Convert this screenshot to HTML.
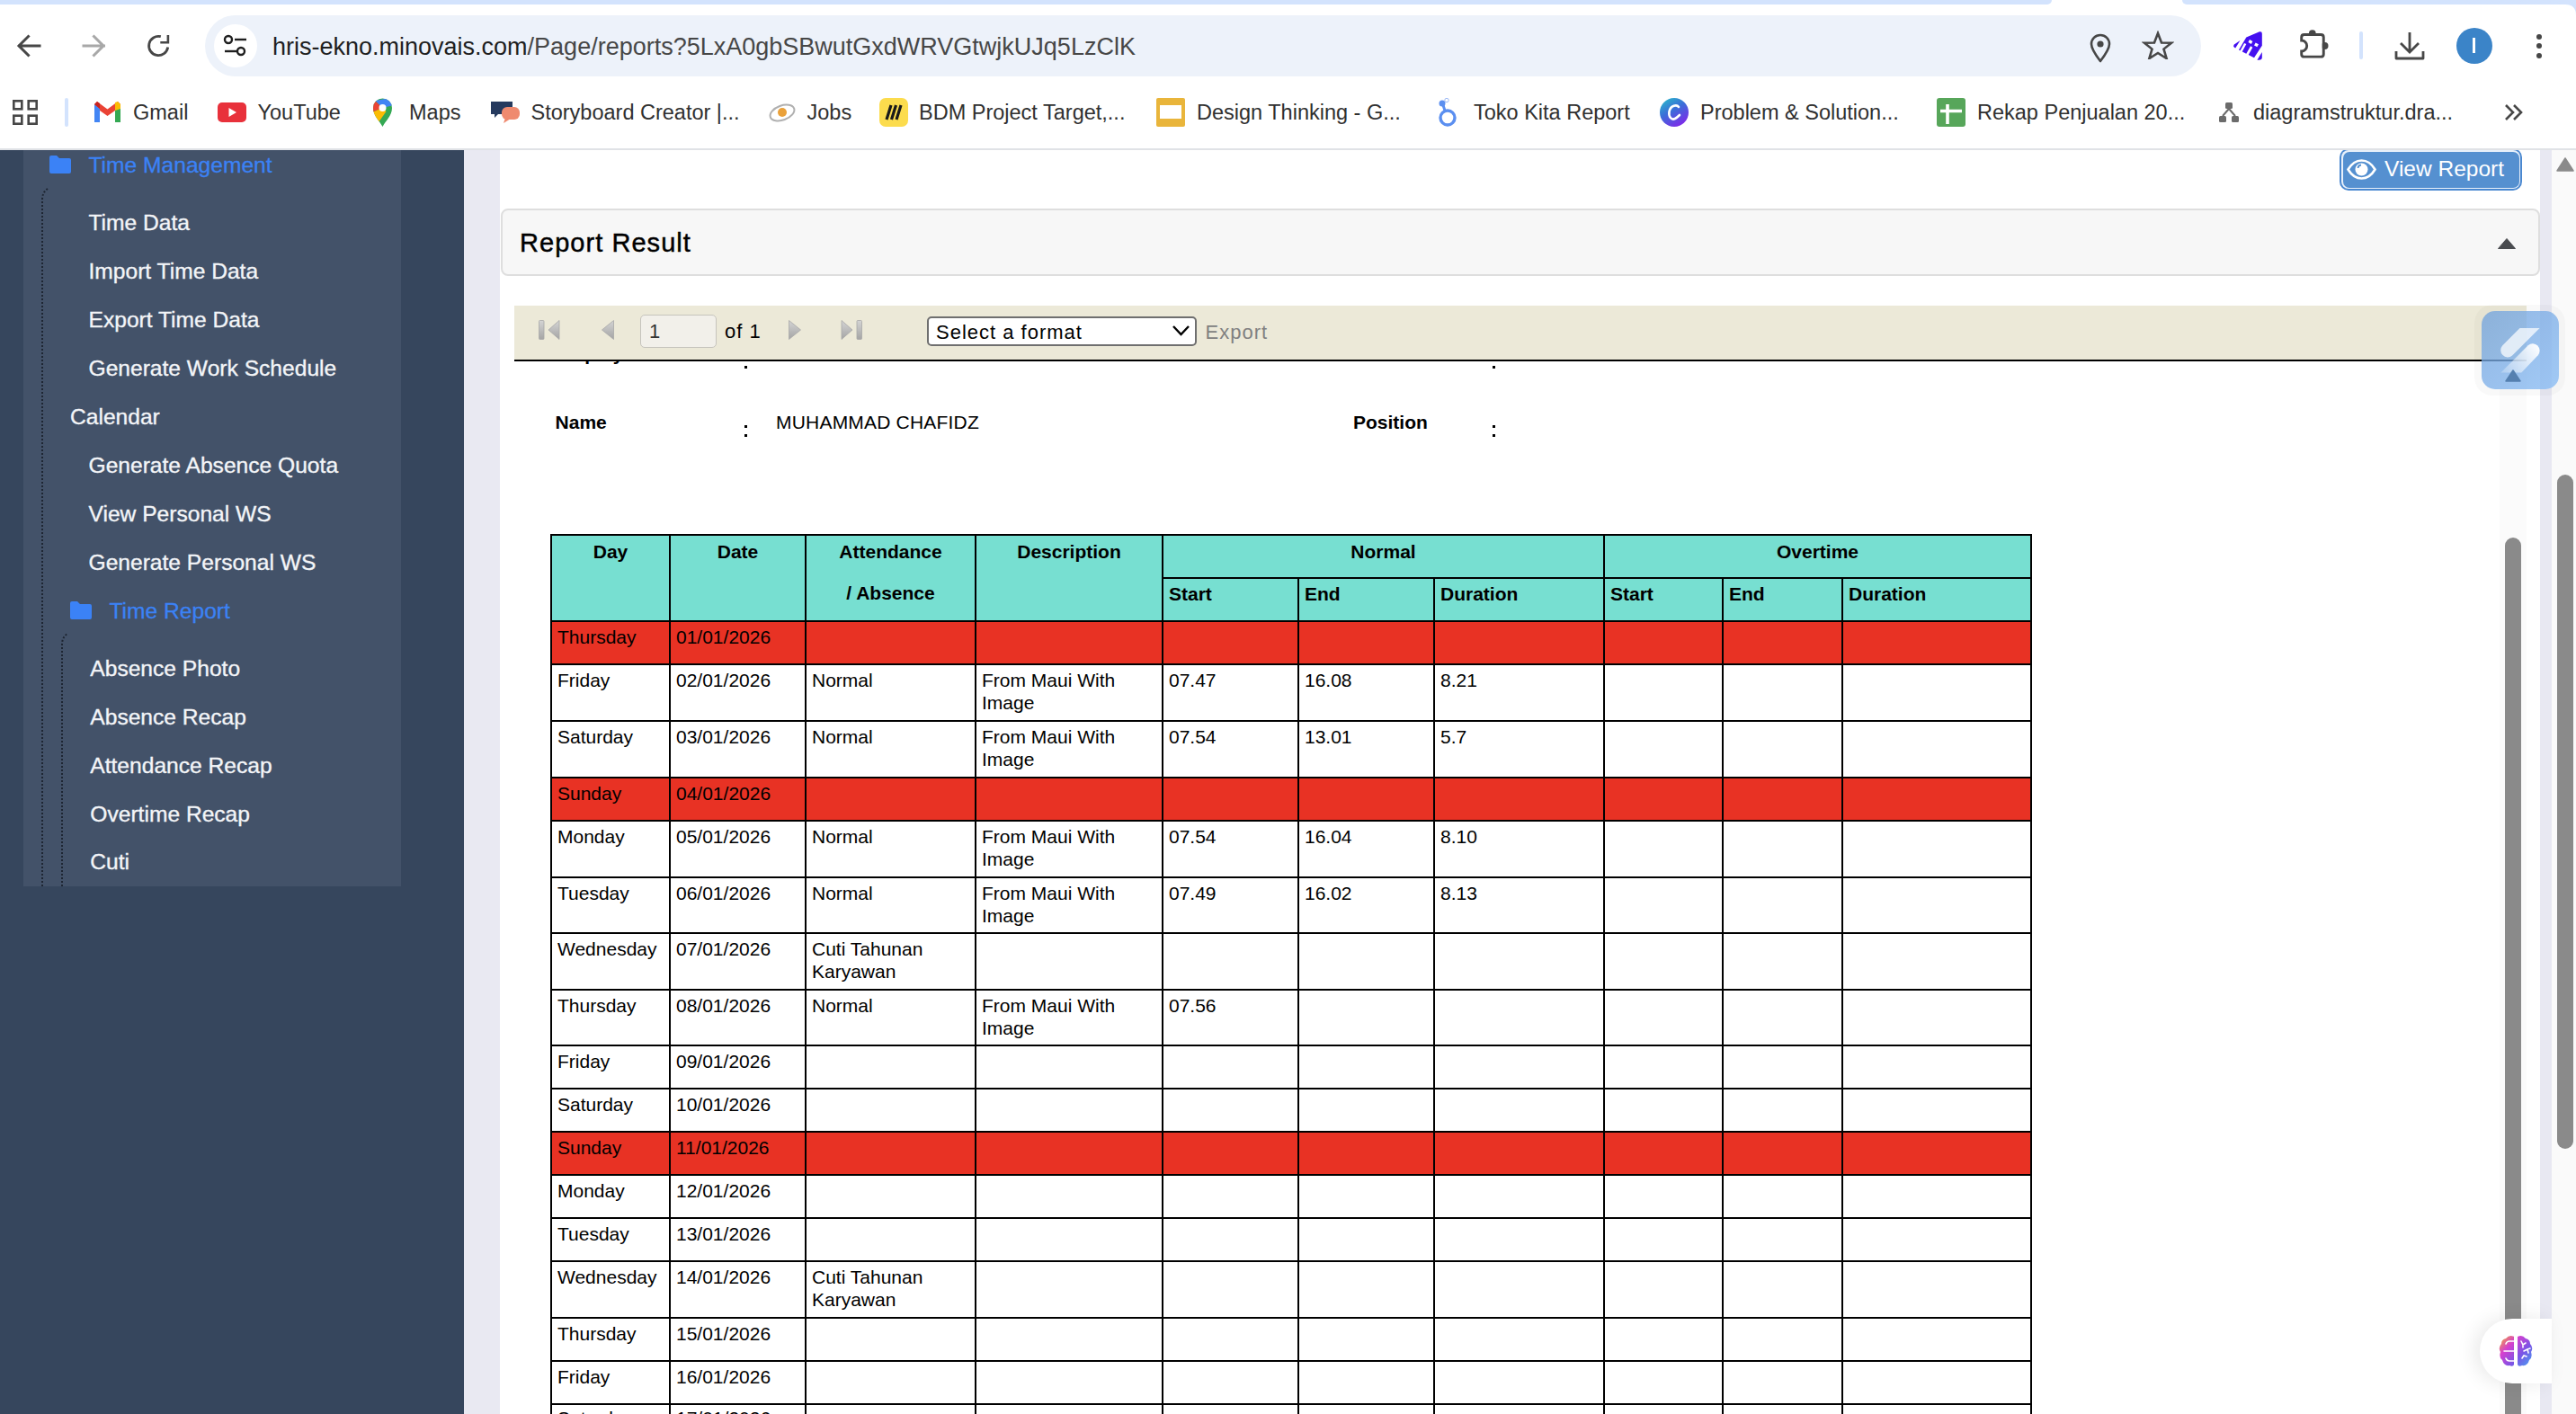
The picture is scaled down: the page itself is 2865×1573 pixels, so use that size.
<!DOCTYPE html><html><head><meta charset="utf-8"><style>
html,body{margin:0;padding:0;}
body{width:2865px;height:1573px;overflow:hidden;position:relative;background:#fff;font-family:"Liberation Sans",sans-serif;}
.a{position:absolute;}
.t{position:absolute;white-space:nowrap;}
</style></head><body>
<div class="a" style="left:0px;top:0px;width:2865px;height:167px;background:#fff"></div>
<div class="a" style="left:0px;top:0px;width:2282px;height:5px;background:#d3e3fd;border-radius:0 0 10px 0"></div>
<div class="a" style="left:2427px;top:0px;width:438px;height:5px;background:#d3e3fd;border-radius:0 0 0 10px"></div>
<svg class="a" style="left:2853px;top:5px" width="12" height="12" viewBox="0 0 12 12"><path d="M0 0H12V12Q12 0 0 0Z" fill="#d3e3fd"/></svg>
<svg class="a" style="left:16px;top:36px" width="32" height="30" viewBox="0 0 32 30"><path d="M28 15H5.5M15.5 4.5L5 15L15.5 25.5" fill="none" stroke="#474747" stroke-width="3" stroke-linecap="square"/></svg>
<svg class="a" style="left:89px;top:36px" width="32" height="30" viewBox="0 0 32 30"><path d="M4 15H26.5M15.5 4.5L26 15L15.5 25.5" fill="none" stroke="#a8a8a8" stroke-width="3" stroke-linecap="square"/></svg>
<svg class="a" style="left:160px;top:36px" width="32" height="30" viewBox="0 0 32 30"><path d="M18.8 4.7A10.6 10.6 0 1 0 26.7 16.5" fill="none" stroke="#474747" stroke-width="2.8"/><path d="M18.3 11.2H26.9V3.1" fill="none" stroke="#474747" stroke-width="2.6"/></svg>
<div class="a" style="left:228px;top:17px;width:2220px;height:68px;background:#edf2fa;border-radius:34px"></div>
<div class="a" style="left:238px;top:27px;width:48px;height:48px;background:#fff;border-radius:50%"></div>
<svg class="a" style="left:248px;top:38px" width="28" height="26" viewBox="0 0 28 26"><circle cx="6" cy="6" r="4" fill="none" stroke="#1f1f1f" stroke-width="2.4"/><path d="M13 6H26" stroke="#1f1f1f" stroke-width="2.4"/><circle cx="20" cy="19" r="4" fill="none" stroke="#1f1f1f" stroke-width="2.4"/><path d="M2 19H15" stroke="#1f1f1f" stroke-width="2.4"/></svg>
<div class="t " style="left:303px;top:36.92px;font-size:27px;line-height:31.05px;color:#1f1f1f">hris-ekno.minovais.com<span style="color:#474747">/Page/reports?5LxA0gbSBwutGxdWRVGtwjkUJq5LzClK</span></div>
<svg class="a" style="left:2323px;top:37px" width="26" height="33" viewBox="0 0 26 33"><path d="M13 31C13 31 3 18 3 12A10 10 0 0 1 23 12C23 18 13 31 13 31Z" fill="none" stroke="#474747" stroke-width="2.6" stroke-linejoin="round"/><circle cx="13" cy="12" r="3.6" fill="#474747"/></svg>
<svg class="a" style="left:2382px;top:34px" width="36" height="32" viewBox="0 0 36 32"><path d="M18 3L22 13.5L33 13.8L24.5 20.6L27.6 31L18 25L8.4 31L11.5 20.6L3 13.8L14 13.5Z" fill="none" stroke="#474747" stroke-width="2.6" stroke-linejoin="miter"/></svg>
<svg class="a" style="left:2484px;top:35px" width="32" height="32" viewBox="0 0 32 32"><path d="M14.3 6.5L29 0.3Q31.8 -0.5 31.8 2.5V15.7L23 29.3L6 20.6Z" fill="#4410f0"/><path d="M13.2 13.5L8 23M20.2 17L14.6 27" stroke="#fff" stroke-width="2.6"/><rect x="17" y="9.8" width="3.8" height="3.4" transform="rotate(28 18.9 11.5)" fill="#fff"/><rect x="23.6" y="13.2" width="3.8" height="3.4" transform="rotate(28 25.5 14.9)" fill="#fff"/><path d="M7.5 10L0.8 14.5Q-0.8 17 2.2 18.6Z" fill="#4410f0"/><path d="M31.8 23V29Q31.8 31.8 28.5 31.8H26.4Z" fill="#4410f0"/></svg>
<svg class="a" style="left:2555px;top:30px" width="36" height="38" viewBox="0 0 36 38"><circle cx="16.8" cy="7.2" r="3.9" fill="#474747"/><circle cx="30.6" cy="21" r="3.9" fill="#474747"/><rect x="6.15" y="10" width="21.6" height="21.7" fill="#fff"/><path d="M4.7 11.55Q4.7 8.55 7.7 8.55H26.25Q29.25 8.55 29.25 11.55V30.15Q29.25 33.15 26.25 33.15H7.7Q4.7 33.15 4.7 30.15V27A6 6 0 0 0 4.7 15Z" fill="none" stroke="#474747" stroke-width="2.9"/></svg>
<div class="a" style="left:2624px;top:35px;width:4px;height:31px;background:#d3e3fd;border-radius:2px"></div>
<svg class="a" style="left:2663px;top:34px" width="34" height="34" viewBox="0 0 34 34"><path d="M17 2V23M7 14L17 24L27 14" fill="none" stroke="#474747" stroke-width="2.8"/><path d="M2 23V31H32V23" fill="none" stroke="#474747" stroke-width="2.8" stroke-linejoin="round"/></svg>
<div class="a" style="left:2732px;top:31px;width:40px;height:40px;background:#3b84c8;border-radius:50%"></div>
<div class="a" style="left:2750px;top:42px;width:3px;height:17px;background:#fff"></div>
<div class="a" style="left:2821px;top:38px;width:6px;height:6px;background:#474747;border-radius:50%"></div>
<div class="a" style="left:2821px;top:48px;width:6px;height:6px;background:#474747;border-radius:50%"></div>
<div class="a" style="left:2821px;top:59px;width:6px;height:6px;background:#474747;border-radius:50%"></div>
<svg class="a" style="left:14px;top:111px" width="29" height="29" viewBox="0 0 29 29"><g fill="none" stroke="#474747" stroke-width="2.6"><rect x="1.3" y="1.3" width="9" height="9"/><rect x="17.7" y="1.3" width="9" height="9"/><rect x="1.3" y="17.7" width="9" height="9"/><rect x="17.7" y="17.7" width="9" height="9"/></g></svg>
<div class="a" style="left:72px;top:109px;width:4px;height:32px;background:#d3e3fd;border-radius:2px"></div>
<svg class="a" style="left:105px;top:113px" width="29" height="23" viewBox="0 0 29 23"><path d="M0 3V23H6V10L14.5 16L23 10V23H29V3L26 0L14.5 8.5L3 0Z" fill="#ea4335"/><path d="M0 3V23H6V8Z" fill="#4285f4"/><path d="M23 8V23H29V3Z" fill="#34a853"/><path d="M23 1L26 0L29 3V8L23 10Z" fill="#fbbc04"/><path d="M0 3L3 0L6 2V8Z" fill="#c5221f"/></svg>
<div class="t " style="left:148px;top:112.35px;font-size:23.5px;line-height:27.02px;color:#303030">Gmail</div>
<svg class="a" style="left:242px;top:114px" width="32" height="22" viewBox="0 0 32 22"><rect width="32" height="22" rx="5" fill="#e8313b"/><path d="M12.5 6V16L21 11Z" fill="#fff"/></svg>
<div class="t " style="left:286.5px;top:112.35px;font-size:23.5px;line-height:27.02px;color:#303030">YouTube</div>
<svg class="a" style="left:414px;top:109px" width="23" height="32" viewBox="0 0 23 32"><defs><clipPath id="pinc"><path d="M11.5 32C8 25 1 20 1 11A10.5 10.5 0 0 1 22 11C22 20 15 25 11.5 32Z"/></clipPath></defs><g clip-path="url(#pinc)"><rect width="23" height="32" fill="#34a853"/><path d="M3 3L20 0L24 8L11.5 11Z" fill="#4285f4"/><path d="M3 3L11.5 11L0 16V0Z" fill="#ea4335"/><path d="M0 16L11.5 11L15.5 15L7 27L0 22Z" fill="#fbbc04"/></g><circle cx="11.5" cy="11" r="4" fill="#fff"/></svg>
<div class="t " style="left:455px;top:112.35px;font-size:23.5px;line-height:27.02px;color:#303030">Maps</div>
<svg class="a" style="left:546px;top:113px" width="32" height="24" viewBox="0 0 32 24"><path d="M0 0H24V14H8L4 18V14H0Z" fill="#253a5e"/><rect x="12" y="6" width="20" height="14" rx="6" fill="#ef8a6f"/><path d="M16 18L14 24L22 19Z" fill="#ef8a6f"/></svg>
<div class="t " style="left:590.5px;top:112.35px;font-size:23.5px;line-height:27.02px;color:#303030">Storyboard Creator |...</div>
<svg class="a" style="left:854px;top:113px" width="32" height="25" viewBox="0 0 32 25"><ellipse cx="16" cy="12.5" rx="14" ry="8" transform="rotate(-20 16 12.5)" fill="none" stroke="#b0b0b0" stroke-width="2"/><circle cx="16" cy="12" r="5" fill="#eaa13a"/></svg>
<div class="t " style="left:897.5px;top:112.35px;font-size:23.5px;line-height:27.02px;color:#303030">Jobs</div>
<svg class="a" style="left:978px;top:109px" width="32" height="32" viewBox="0 0 32 32"><rect width="32" height="32" rx="7" fill="#fcdc4d"/><path d="M8 24L13 8M13.5 24L18.5 8M19 24L24 8" stroke="#1a1a1a" stroke-width="3.2"/></svg>
<div class="t " style="left:1022px;top:112.35px;font-size:23.5px;line-height:27.02px;color:#303030">BDM Project Target,...</div>
<svg class="a" style="left:1286px;top:109px" width="32" height="32" viewBox="0 0 32 32"><rect width="32" height="32" rx="2" fill="#e9b53b"/><rect x="4" y="8" width="24" height="15" fill="#fff"/></svg>
<div class="t " style="left:1331px;top:112.35px;font-size:23.5px;line-height:27.02px;color:#303030">Design Thinking - G...</div>
<svg class="a" style="left:1598px;top:109px" width="24" height="32" viewBox="0 0 24 32"><circle cx="12" cy="22" r="8" fill="none" stroke="#5b8ff0" stroke-width="3.4"/><path d="M9 14L6 5" stroke="#5b8ff0" stroke-width="3"/><circle cx="6" cy="6" r="3.5" fill="#5b8ff0"/><circle cx="11" cy="2.5" r="2.2" fill="none" stroke="#9ab8f5" stroke-width="1"/></svg>
<div class="t " style="left:1639px;top:112.35px;font-size:23.5px;line-height:27.02px;color:#303030">Toko Kita Report</div>
<svg class="a" style="left:1846px;top:109px" width="32" height="32" viewBox="0 0 32 32"><defs><linearGradient id="cg" x1="0" y1="0" x2="0.6" y2="1"><stop offset="0" stop-color="#27c2c8"/><stop offset="0.5" stop-color="#3a6fd8"/><stop offset="1" stop-color="#7a2ee8"/></linearGradient></defs><circle cx="16" cy="16" r="16" fill="url(#cg)"/><path d="M21 10C19 7 12 8 10.5 15C9.5 21 13 25 17 23C19 22 21 20 22 19" fill="none" stroke="#fff" stroke-width="2.6" stroke-linecap="round"/></svg>
<div class="t " style="left:1891px;top:112.35px;font-size:23.5px;line-height:27.02px;color:#303030">Problem &amp; Solution...</div>
<svg class="a" style="left:2154px;top:109px" width="32" height="32" viewBox="0 0 32 32"><rect width="32" height="32" rx="3" fill="#57a65a"/><path d="M4 14.5H28M12 7V29" stroke="#fff" stroke-width="3.6"/></svg>
<div class="t " style="left:2199px;top:112.35px;font-size:23.5px;line-height:27.02px;color:#303030">Rekap Penjualan 20...</div>
<svg class="a" style="left:2467px;top:113px" width="24" height="24" viewBox="0 0 24 24"><rect x="8" y="1" width="8" height="7" rx="1.5" fill="#6b6b6b"/><rect x="1" y="16" width="8" height="7" rx="1.5" fill="#6b6b6b"/><rect x="15" y="16" width="8" height="7" rx="1.5" fill="#6b6b6b"/><path d="M12 8L5 16M12 8L19 16" stroke="#6b6b6b" stroke-width="2"/></svg>
<div class="t " style="left:2506px;top:112.35px;font-size:23.5px;line-height:27.02px;color:#303030">diagramstruktur.dra...</div>
<svg class="a" style="left:2784px;top:115px" width="24" height="20" viewBox="0 0 24 20"><path d="M3 2L11 10L3 18M12 2L20 10L12 18" fill="none" stroke="#474747" stroke-width="2.6"/></svg>
<div class="a" style="left:0px;top:165px;width:2865px;height:2px;background:#e0e2e6"></div>
<div class="a" style="left:0px;top:167px;width:516px;height:1406px;background:#36465d"></div>
<div class="a" style="left:26px;top:167px;width:420px;height:819px;background:#435269"></div>
<svg class="a" style="left:44px;top:208px" width="12" height="778" viewBox="0 0 12 778"><path d="M3 778V14Q3 6 9 2" fill="none" stroke="#1e2633" stroke-width="2" stroke-dasharray="2 2"/></svg>
<svg class="a" style="left:66px;top:703px" width="12" height="283" viewBox="0 0 12 283"><path d="M3 283V14Q3 6 9 2" fill="none" stroke="#1e2633" stroke-width="2" stroke-dasharray="2 2"/></svg>
<svg class="a" style="left:55px;top:173px" width="24" height="20" viewBox="0 0 24 20"><path d="M0 2A2 2 0 0 1 2 0H8L11 3H22A2 2 0 0 1 24 5V18A2 2 0 0 1 22 20H2A2 2 0 0 1 0 18Z" fill="#3b82f6"/></svg>
<div class="t " style="left:98.5px;top:169.83px;font-size:24.6px;line-height:28.29px;color:#3b82f6;-webkit-text-stroke:0.3px #3b82f6">Time Management</div>
<div class="t " style="left:98.5px;top:233.93px;font-size:24.6px;line-height:28.29px;color:#f3f5f8;-webkit-text-stroke:0.35px #f3f5f8">Time Data</div>
<div class="t " style="left:98.5px;top:288.03px;font-size:24.6px;line-height:28.29px;color:#f3f5f8;-webkit-text-stroke:0.35px #f3f5f8">Import Time Data</div>
<div class="t " style="left:98.5px;top:342.03px;font-size:24.6px;line-height:28.29px;color:#f3f5f8;-webkit-text-stroke:0.35px #f3f5f8">Export Time Data</div>
<div class="t " style="left:98.5px;top:396.03px;font-size:24.6px;line-height:28.29px;color:#f3f5f8;-webkit-text-stroke:0.35px #f3f5f8">Generate Work Schedule</div>
<div class="t " style="left:78px;top:449.93px;font-size:24.6px;line-height:28.29px;color:#f3f5f8;-webkit-text-stroke:0.35px #f3f5f8">Calendar</div>
<div class="t " style="left:98.5px;top:504.03px;font-size:24.6px;line-height:28.29px;color:#f3f5f8;-webkit-text-stroke:0.35px #f3f5f8">Generate Absence Quota</div>
<div class="t " style="left:98.5px;top:557.93px;font-size:24.6px;line-height:28.29px;color:#f3f5f8;-webkit-text-stroke:0.35px #f3f5f8">View Personal WS</div>
<div class="t " style="left:98.5px;top:611.93px;font-size:24.6px;line-height:28.29px;color:#f3f5f8;-webkit-text-stroke:0.35px #f3f5f8">Generate Personal WS</div>
<svg class="a" style="left:78px;top:669px" width="24" height="20" viewBox="0 0 24 20"><path d="M0 2A2 2 0 0 1 2 0H8L11 3H22A2 2 0 0 1 24 5V18A2 2 0 0 1 22 20H2A2 2 0 0 1 0 18Z" fill="#3b82f6"/></svg>
<div class="t " style="left:121.5px;top:665.63px;font-size:24.6px;line-height:28.29px;color:#3b82f6;-webkit-text-stroke:0.3px #3b82f6">Time Report</div>
<div class="t " style="left:100.3px;top:729.73px;font-size:24.6px;line-height:28.29px;color:#f3f5f8;-webkit-text-stroke:0.35px #f3f5f8">Absence Photo</div>
<div class="t " style="left:100.3px;top:783.66px;font-size:24.6px;line-height:28.29px;color:#f3f5f8;-webkit-text-stroke:0.35px #f3f5f8">Absence Recap</div>
<div class="t " style="left:100.3px;top:837.59px;font-size:24.6px;line-height:28.29px;color:#f3f5f8;-webkit-text-stroke:0.35px #f3f5f8">Attendance Recap</div>
<div class="t " style="left:100.3px;top:891.52px;font-size:24.6px;line-height:28.29px;color:#f3f5f8;-webkit-text-stroke:0.35px #f3f5f8">Overtime Recap</div>
<div class="t " style="left:100.3px;top:945.45px;font-size:24.6px;line-height:28.29px;color:#f3f5f8;-webkit-text-stroke:0.35px #f3f5f8">Cuti</div>
<div class="a" style="left:516px;top:167px;width:40px;height:1406px;background:#e9e9f2"></div>
<div class="a" style="left:2602px;top:165px;width:203px;height:47px;background:#4a88d0;border-radius:10px"></div>
<div class="a" style="left:2604px;top:167px;width:199px;height:43px;background:#e8f0fa;border-radius:8px"></div>
<div class="a" style="left:2605.5px;top:168.5px;width:196px;height:40px;background:#5590d0;border-radius:7px"></div>
<div class="a" style="left:2560px;top:150px;width:300px;height:15px;background:#fff"></div>
<div class="a" style="left:2560px;top:165px;width:300px;height:2px;background:#e0e2e6"></div>
<svg class="a" style="left:2610px;top:177px" width="33" height="23" viewBox="0 0 33 23"><path d="M1.5 11.5C6 4 11 1.5 16.5 1.5S27 4 31.5 11.5C27 19 22 21.5 16.5 21.5S6 19 1.5 11.5Z" fill="none" stroke="#fff" stroke-width="2.6"/><circle cx="16.5" cy="11.5" r="7" fill="#fff"/><path d="M12.5 10A4 4 0 0 1 16 6.5" fill="none" stroke="#5590d0" stroke-width="1.8"/></svg>
<div class="t " style="left:2652px;top:173.83px;font-size:24.5px;line-height:28.17px;color:#fff">View Report</div>
<div class="a" style="left:557px;top:232px;width:2268px;height:75px;background:#f7f7f7;border:2px solid #dedede;border-radius:8px;box-sizing:border-box"></div>
<div class="t " style="left:578px;top:254.28px;font-size:29px;line-height:33.35px;color:#000;-webkit-text-stroke:0.45px #000;letter-spacing:1.05px">Report Result</div>
<svg class="a" style="left:2778px;top:265px" width="20" height="12" viewBox="0 0 20 12"><path d="M10 0.5L19.5 11.5H0.5Z" fill="#4a4c50" stroke="#4a4c50" stroke-width="1" stroke-linejoin="round"/></svg>
<div class="a" style="left:572px;top:340px;width:2238px;height:60px;background:#ece9d8"></div>
<div class="a" style="left:572px;top:400px;width:2238px;height:2px;background:#000"></div>
<svg class="a" style="left:599px;top:356px" width="24" height="22" viewBox="0 0 24 22"><defs><linearGradient id="tg" x1="0" y1="0" x2="0" y2="1"><stop offset="0" stop-color="#d4d4d4"/><stop offset="1" stop-color="#a4a4a4"/></linearGradient></defs><rect x="0.5" y="0.5" width="5.5" height="21" rx="1" fill="url(#tg)" stroke="#a8a8a8" stroke-width="0.8"/><path d="M23 0.5V21.5L11 11Z" fill="url(#tg)" stroke="#a8a8a8" stroke-width="0.8"/></svg>
<svg class="a" style="left:669px;top:356px" width="14" height="22" viewBox="0 0 14 22"><path d="M13.5 0.5V21.5L0.5 11Z" fill="url(#tg)" stroke="#a8a8a8" stroke-width="0.8"/></svg>
<div class="a" style="left:712px;top:350px;width:85px;height:37px;background:#f2f0ea;border:1.5px solid #c6c4bd;border-radius:5px;box-sizing:border-box"></div>
<div class="t " style="left:722px;top:356.23px;font-size:22px;line-height:25.3px;color:#333">1</div>
<div class="t " style="left:806px;top:356.23px;font-size:22px;line-height:25.3px;color:#000;letter-spacing:1px">of 1</div>
<svg class="a" style="left:877px;top:356px" width="14" height="22" viewBox="0 0 14 22"><path d="M0.5 0.5V21.5L13.5 11Z" fill="url(#tg)" stroke="#a8a8a8" stroke-width="0.8"/></svg>
<svg class="a" style="left:935px;top:356px" width="24" height="22" viewBox="0 0 24 22"><path d="M1 0.5V21.5L13 11Z" fill="url(#tg)" stroke="#a8a8a8" stroke-width="0.8"/><rect x="18" y="0.5" width="5.5" height="21" rx="1" fill="url(#tg)" stroke="#a8a8a8" stroke-width="0.8"/></svg>
<div class="a" style="left:1031px;top:352px;width:300px;height:33px;background:#fff;border:2px solid #6f6f6f;border-radius:5px;box-sizing:border-box"></div>
<div class="t " style="left:1041px;top:357.03px;font-size:22px;line-height:25.3px;color:#000;letter-spacing:1px">Select a format</div>
<svg class="a" style="left:1304px;top:362px" width="19" height="12" viewBox="0 0 19 12"><path d="M1 1L9.5 10L18 1" fill="none" stroke="#000" stroke-width="2.4"/></svg>
<div class="t " style="left:1340.5px;top:357.03px;font-size:22px;line-height:25.3px;color:#808080;letter-spacing:1px">Export</div>
<div class="a" style="left:2780px;top:402px;width:30px;height:1171px;background:#fbfbfb"></div>
<div class="a" style="left:2825px;top:167px;width:13px;height:1406px;background:#e8e8f2"></div>
<div class="a" style="left:2838px;top:167px;width:27px;height:1406px;background:#fafafa"></div>
<svg class="a" style="left:2843px;top:175px" width="20" height="16" viewBox="0 0 20 16"><path d="M10 1L19 15H1Z" fill="#8a8a8a" stroke="#8a8a8a" stroke-width="1.5" stroke-linejoin="round"/></svg>
<div class="a" style="left:2844px;top:528px;width:18px;height:750px;background:#8a8a8a;border-radius:9px"></div>
<div class="a" style="left:2786px;top:598px;width:18px;height:1000px;background:#8a8a8a;border-radius:9px"></div>
<div class="a" style="left:572px;top:402px;width:2208px;height:200px;overflow:hidden">
<div class="t " style="left:45.60000000000002px;top:-20.35px;font-size:21px;line-height:24.15px;font-weight:bold;color:#000">Employee</div>
</div>
<div class="t " style="left:617.6px;top:457.65px;font-size:21px;line-height:24.15px;font-weight:bold;color:#000">Name</div>
<div class="a" style="left:827.5px;top:472.5px;width:3.5px;height:3px;background:#000"></div>
<div class="a" style="left:827.5px;top:483px;width:3.5px;height:3px;background:#000"></div>
<div class="a" style="left:827.5px;top:406.6px;width:3.5px;height:3px;background:#000"></div>
<div class="a" style="left:1659.5px;top:472.5px;width:3.5px;height:3px;background:#000"></div>
<div class="a" style="left:1659.5px;top:483px;width:3.5px;height:3px;background:#000"></div>
<div class="a" style="left:1659.5px;top:406.6px;width:3.5px;height:3px;background:#000"></div>
<div class="t " style="left:863px;top:457.65px;font-size:21px;line-height:24.15px;color:#000;letter-spacing:0.2px">MUHAMMAD CHAFIDZ</div>
<div class="t " style="left:1505px;top:457.65px;font-size:21px;line-height:24.15px;font-weight:bold;color:#000">Position</div>
<div class="a" style="left:612px;top:594px;width:1648px;height:98px;background:#77dfd1"></div>
<div class="a" style="left:612px;top:690px;width:1648px;height:48px;background:#e83224"></div>
<div class="a" style="left:612px;top:864px;width:1648px;height:48px;background:#e83224"></div>
<div class="a" style="left:612px;top:1258px;width:1648px;height:48px;background:#e83224"></div>
<div class="a" style="left:612px;top:594px;width:1648px;height:2px;background:#000"></div>
<div class="a" style="left:612px;top:690px;width:1648px;height:2px;background:#000"></div>
<div class="a" style="left:612px;top:738px;width:1648px;height:2px;background:#000"></div>
<div class="a" style="left:612px;top:801px;width:1648px;height:2px;background:#000"></div>
<div class="a" style="left:612px;top:864px;width:1648px;height:2px;background:#000"></div>
<div class="a" style="left:612px;top:912px;width:1648px;height:2px;background:#000"></div>
<div class="a" style="left:612px;top:975px;width:1648px;height:2px;background:#000"></div>
<div class="a" style="left:612px;top:1037px;width:1648px;height:2px;background:#000"></div>
<div class="a" style="left:612px;top:1100px;width:1648px;height:2px;background:#000"></div>
<div class="a" style="left:612px;top:1162px;width:1648px;height:2px;background:#000"></div>
<div class="a" style="left:612px;top:1210px;width:1648px;height:2px;background:#000"></div>
<div class="a" style="left:612px;top:1258px;width:1648px;height:2px;background:#000"></div>
<div class="a" style="left:612px;top:1306px;width:1648px;height:2px;background:#000"></div>
<div class="a" style="left:612px;top:1354px;width:1648px;height:2px;background:#000"></div>
<div class="a" style="left:612px;top:1402px;width:1648px;height:2px;background:#000"></div>
<div class="a" style="left:612px;top:1465px;width:1648px;height:2px;background:#000"></div>
<div class="a" style="left:612px;top:1513px;width:1648px;height:2px;background:#000"></div>
<div class="a" style="left:612px;top:1561px;width:1648px;height:2px;background:#000"></div>
<div class="a" style="left:612px;top:1609px;width:1648px;height:2px;background:#000"></div>
<div class="a" style="left:1292px;top:642px;width:968px;height:2px;background:#000"></div>
<div class="a" style="left:612px;top:594px;width:2px;height:1000px;background:#000"></div>
<div class="a" style="left:744px;top:594px;width:2px;height:1000px;background:#000"></div>
<div class="a" style="left:895px;top:594px;width:2px;height:1000px;background:#000"></div>
<div class="a" style="left:1084px;top:594px;width:2px;height:1000px;background:#000"></div>
<div class="a" style="left:1292px;top:594px;width:2px;height:1000px;background:#000"></div>
<div class="a" style="left:1443px;top:642px;width:2px;height:952px;background:#000"></div>
<div class="a" style="left:1594px;top:642px;width:2px;height:952px;background:#000"></div>
<div class="a" style="left:1783px;top:594px;width:2px;height:1000px;background:#000"></div>
<div class="a" style="left:1915px;top:642px;width:2px;height:952px;background:#000"></div>
<div class="a" style="left:2048px;top:642px;width:2px;height:952px;background:#000"></div>
<div class="a" style="left:2258px;top:594px;width:2px;height:1000px;background:#000"></div>
<div class="t" style="left:614px;width:130px;text-align:center;top:602.35px;font-size:21px;line-height:24.15px;font-weight:bold;color:#000">Day</div>
<div class="t" style="left:746px;width:149px;text-align:center;top:602.35px;font-size:21px;line-height:24.15px;font-weight:bold;color:#000">Date</div>
<div class="t" style="left:897px;width:187px;text-align:center;top:602.35px;font-size:21px;line-height:24.15px;font-weight:bold;color:#000">Attendance</div>
<div class="t" style="left:897px;width:187px;text-align:center;top:647.95px;font-size:21px;line-height:24.15px;font-weight:bold;color:#000">/ Absence</div>
<div class="t" style="left:1086px;width:206px;text-align:center;top:602.35px;font-size:21px;line-height:24.15px;font-weight:bold;color:#000">Description</div>
<div class="t" style="left:1294px;width:489px;text-align:center;top:602.35px;font-size:21px;line-height:24.15px;font-weight:bold;color:#000">Normal</div>
<div class="t" style="left:1785px;width:473px;text-align:center;top:602.35px;font-size:21px;line-height:24.15px;font-weight:bold;color:#000">Overtime</div>
<div class="t " style="left:1300px;top:649.15px;font-size:21px;line-height:24.15px;font-weight:bold;color:#000">Start</div>
<div class="t " style="left:1451px;top:649.15px;font-size:21px;line-height:24.15px;font-weight:bold;color:#000">End</div>
<div class="t " style="left:1602px;top:649.15px;font-size:21px;line-height:24.15px;font-weight:bold;color:#000">Duration</div>
<div class="t " style="left:1791px;top:649.15px;font-size:21px;line-height:24.15px;font-weight:bold;color:#000">Start</div>
<div class="t " style="left:1923px;top:649.15px;font-size:21px;line-height:24.15px;font-weight:bold;color:#000">End</div>
<div class="t " style="left:2056px;top:649.15px;font-size:21px;line-height:24.15px;font-weight:bold;color:#000">Duration</div>
<div class="t " style="left:620px;top:697.12px;font-size:21px;line-height:24.6px;color:#000">Thursday</div>
<div class="t " style="left:752px;top:697.12px;font-size:21px;line-height:24.6px;color:#000">01/01/2026</div>
<div class="t " style="left:620px;top:745.12px;font-size:21px;line-height:24.6px;color:#000">Friday</div>
<div class="t " style="left:752px;top:745.12px;font-size:21px;line-height:24.6px;color:#000">02/01/2026</div>
<div class="t " style="left:903px;top:745.12px;font-size:21px;line-height:24.6px;color:#000">Normal</div>
<div class="t " style="left:1092px;top:745.12px;font-size:21px;line-height:24.6px;color:#000">From Maui With<br>Image</div>
<div class="t " style="left:1300px;top:745.12px;font-size:21px;line-height:24.6px;color:#000">07.47</div>
<div class="t " style="left:1451px;top:745.12px;font-size:21px;line-height:24.6px;color:#000">16.08</div>
<div class="t " style="left:1602px;top:745.12px;font-size:21px;line-height:24.6px;color:#000">8.21</div>
<div class="t " style="left:620px;top:808.12px;font-size:21px;line-height:24.6px;color:#000">Saturday</div>
<div class="t " style="left:752px;top:808.12px;font-size:21px;line-height:24.6px;color:#000">03/01/2026</div>
<div class="t " style="left:903px;top:808.12px;font-size:21px;line-height:24.6px;color:#000">Normal</div>
<div class="t " style="left:1092px;top:808.12px;font-size:21px;line-height:24.6px;color:#000">From Maui With<br>Image</div>
<div class="t " style="left:1300px;top:808.12px;font-size:21px;line-height:24.6px;color:#000">07.54</div>
<div class="t " style="left:1451px;top:808.12px;font-size:21px;line-height:24.6px;color:#000">13.01</div>
<div class="t " style="left:1602px;top:808.12px;font-size:21px;line-height:24.6px;color:#000">5.7</div>
<div class="t " style="left:620px;top:871.12px;font-size:21px;line-height:24.6px;color:#000">Sunday</div>
<div class="t " style="left:752px;top:871.12px;font-size:21px;line-height:24.6px;color:#000">04/01/2026</div>
<div class="t " style="left:620px;top:919.12px;font-size:21px;line-height:24.6px;color:#000">Monday</div>
<div class="t " style="left:752px;top:919.12px;font-size:21px;line-height:24.6px;color:#000">05/01/2026</div>
<div class="t " style="left:903px;top:919.12px;font-size:21px;line-height:24.6px;color:#000">Normal</div>
<div class="t " style="left:1092px;top:919.12px;font-size:21px;line-height:24.6px;color:#000">From Maui With<br>Image</div>
<div class="t " style="left:1300px;top:919.12px;font-size:21px;line-height:24.6px;color:#000">07.54</div>
<div class="t " style="left:1451px;top:919.12px;font-size:21px;line-height:24.6px;color:#000">16.04</div>
<div class="t " style="left:1602px;top:919.12px;font-size:21px;line-height:24.6px;color:#000">8.10</div>
<div class="t " style="left:620px;top:982.12px;font-size:21px;line-height:24.6px;color:#000">Tuesday</div>
<div class="t " style="left:752px;top:982.12px;font-size:21px;line-height:24.6px;color:#000">06/01/2026</div>
<div class="t " style="left:903px;top:982.12px;font-size:21px;line-height:24.6px;color:#000">Normal</div>
<div class="t " style="left:1092px;top:982.12px;font-size:21px;line-height:24.6px;color:#000">From Maui With<br>Image</div>
<div class="t " style="left:1300px;top:982.12px;font-size:21px;line-height:24.6px;color:#000">07.49</div>
<div class="t " style="left:1451px;top:982.12px;font-size:21px;line-height:24.6px;color:#000">16.02</div>
<div class="t " style="left:1602px;top:982.12px;font-size:21px;line-height:24.6px;color:#000">8.13</div>
<div class="t " style="left:620px;top:1044.12px;font-size:21px;line-height:24.6px;color:#000">Wednesday</div>
<div class="t " style="left:752px;top:1044.12px;font-size:21px;line-height:24.6px;color:#000">07/01/2026</div>
<div class="t " style="left:903px;top:1044.12px;font-size:21px;line-height:24.6px;color:#000">Cuti Tahunan<br>Karyawan</div>
<div class="t " style="left:620px;top:1107.12px;font-size:21px;line-height:24.6px;color:#000">Thursday</div>
<div class="t " style="left:752px;top:1107.12px;font-size:21px;line-height:24.6px;color:#000">08/01/2026</div>
<div class="t " style="left:903px;top:1107.12px;font-size:21px;line-height:24.6px;color:#000">Normal</div>
<div class="t " style="left:1092px;top:1107.12px;font-size:21px;line-height:24.6px;color:#000">From Maui With<br>Image</div>
<div class="t " style="left:1300px;top:1107.12px;font-size:21px;line-height:24.6px;color:#000">07.56</div>
<div class="t " style="left:620px;top:1169.12px;font-size:21px;line-height:24.6px;color:#000">Friday</div>
<div class="t " style="left:752px;top:1169.12px;font-size:21px;line-height:24.6px;color:#000">09/01/2026</div>
<div class="t " style="left:620px;top:1217.12px;font-size:21px;line-height:24.6px;color:#000">Saturday</div>
<div class="t " style="left:752px;top:1217.12px;font-size:21px;line-height:24.6px;color:#000">10/01/2026</div>
<div class="t " style="left:620px;top:1265.12px;font-size:21px;line-height:24.6px;color:#000">Sunday</div>
<div class="t " style="left:752px;top:1265.12px;font-size:21px;line-height:24.6px;color:#000">11/01/2026</div>
<div class="t " style="left:620px;top:1313.12px;font-size:21px;line-height:24.6px;color:#000">Monday</div>
<div class="t " style="left:752px;top:1313.12px;font-size:21px;line-height:24.6px;color:#000">12/01/2026</div>
<div class="t " style="left:620px;top:1361.12px;font-size:21px;line-height:24.6px;color:#000">Tuesday</div>
<div class="t " style="left:752px;top:1361.12px;font-size:21px;line-height:24.6px;color:#000">13/01/2026</div>
<div class="t " style="left:620px;top:1409.12px;font-size:21px;line-height:24.6px;color:#000">Wednesday</div>
<div class="t " style="left:752px;top:1409.12px;font-size:21px;line-height:24.6px;color:#000">14/01/2026</div>
<div class="t " style="left:903px;top:1409.12px;font-size:21px;line-height:24.6px;color:#000">Cuti Tahunan<br>Karyawan</div>
<div class="t " style="left:620px;top:1472.12px;font-size:21px;line-height:24.6px;color:#000">Thursday</div>
<div class="t " style="left:752px;top:1472.12px;font-size:21px;line-height:24.6px;color:#000">15/01/2026</div>
<div class="t " style="left:620px;top:1520.12px;font-size:21px;line-height:24.6px;color:#000">Friday</div>
<div class="t " style="left:752px;top:1520.12px;font-size:21px;line-height:24.6px;color:#000">16/01/2026</div>
<div class="t " style="left:620px;top:1566.42px;font-size:21px;line-height:24.6px;color:#000">Saturday</div>
<div class="t " style="left:752px;top:1566.42px;font-size:21px;line-height:24.6px;color:#000">17/01/2026</div>
<div class="a" style="left:2752px;top:339px;width:101px;height:101px;background:rgba(0,0,0,0.022);border-radius:20px"></div>
<div class="a" style="left:2760px;top:346px;width:86px;height:87px;border-radius:15px;background:linear-gradient(135deg,rgba(110,160,220,0.75),rgba(140,190,245,0.8))"></div>
<svg class="a" style="left:2780px;top:364px" width="46" height="52" viewBox="0 0 46 52"><defs><linearGradient id="lg2" gradientUnits="userSpaceOnUse" x1="42" y1="22" x2="4" y2="50"><stop offset="0" stop-color="#fff" stop-opacity="0.95"/><stop offset="1" stop-color="#fff" stop-opacity="0.25"/></linearGradient></defs><path d="M22.5 1H44.6L14.1 31.5A7.8 7.8 0 0 1 3.1 20.5Z" fill="rgba(255,255,255,0.72)"/><path d="M1.4 50.6L31.7 20.2A7.8 7.8 0 0 1 42.7 31.2L24.3 50.6Z" fill="url(#lg2)"/></svg>
<svg class="a" style="left:2786px;top:411px" width="18" height="14" viewBox="0 0 18 14"><path d="M9 1L17 13H1Z" fill="#5580b0" stroke="#5580b0" stroke-width="1.5" stroke-linejoin="round"/></svg>
<div class="a" style="left:2758px;top:1467px;width:80px;height:72px;background:#fff;border-radius:36px 0 0 36px;box-shadow:-6px 0 22px rgba(0,0,0,0.09)"></div>
<svg class="a" style="left:2779px;top:1485px" width="38" height="36" viewBox="0 0 38 36"><defs><linearGradient id="bg1" gradientUnits="userSpaceOnUse" x1="2" y1="2" x2="36" y2="34"><stop offset="0" stop-color="#f2a43a"/><stop offset="0.3" stop-color="#d63fcf"/><stop offset="0.65" stop-color="#7a55e6"/><stop offset="1" stop-color="#4a9df0"/></linearGradient></defs><path d="M17 2Q12 -1 8 4Q3 5 3 10Q-1 14 2 19Q0 25 4 28Q6 35 12 34Q16 36 17 33Z" fill="url(#bg1)"/><path d="M21 2Q26 -1 30 4Q35 5 35 10Q39 14 36 19Q38 25 34 28Q32 35 26 34Q22 36 21 33Z" fill="url(#bg1)"/><path d="M17 18H6M17 7H12Q9 7 8 10M17 29H12Q9 29 8 26M25 7L27 11L30 9M27 11L27 14M28 18L32 16M32 16L33 20M32 16L35 15M26 26L28 23L31 24" fill="none" stroke="#fff" stroke-width="1.6" stroke-linecap="round"/></svg>
</body></html>
